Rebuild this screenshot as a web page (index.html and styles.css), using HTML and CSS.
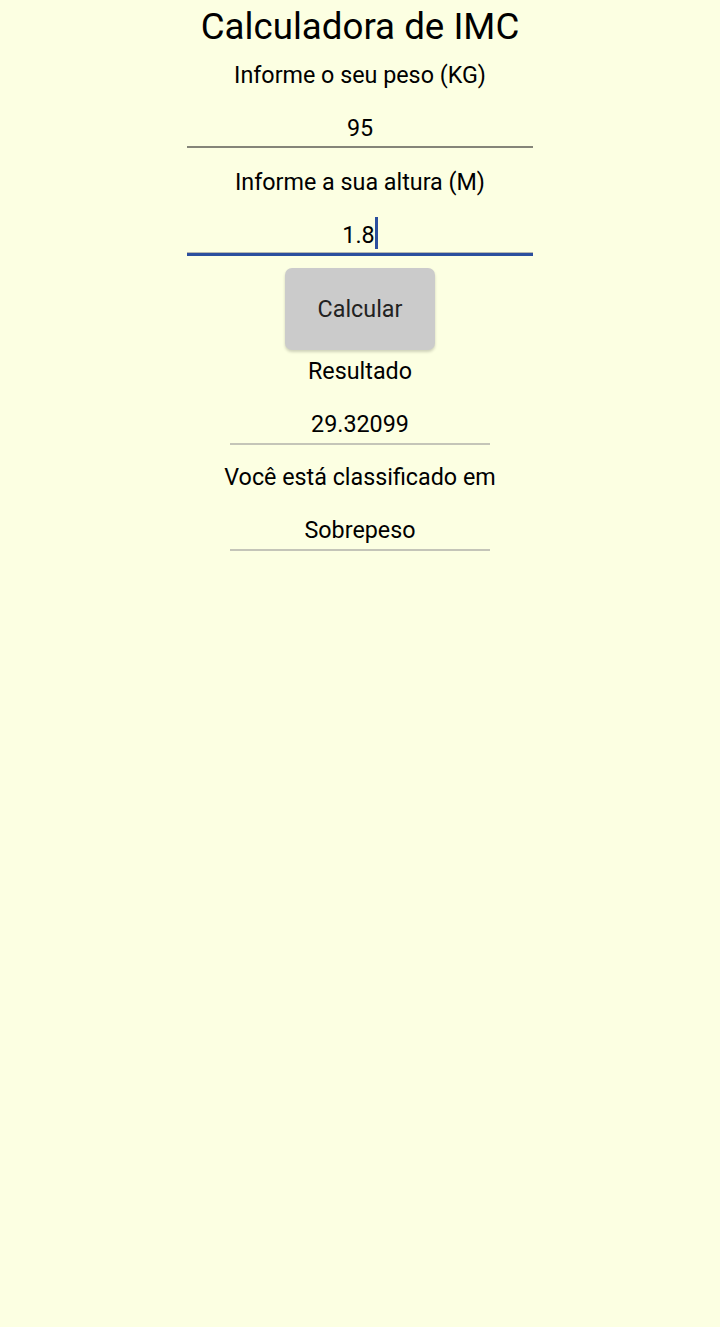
FILE: index.html
```html
<!DOCTYPE html>
<html lang="pt">
<head>
<meta charset="utf-8">
<title>Calculadora de IMC</title>
<link rel="stylesheet" href="styles.css">
</head>
<body>
<main class="screen">
  <h1 class="title">Calculadora de IMC</h1>
  <div class="label label-first">Informe o seu peso (KG)</div>
  <div class="field">95</div>
  <div class="label label-next">Informe a sua altura (M)</div>
  <div class="field field-focused">1.8<span class="cursor"></span></div>
  <button class="btn" type="button">Calcular</button>
  <div class="label label-result">Resultado</div>
  <div class="field field-output">29.32099</div>
  <div class="label label-class">Você está classificado em</div>
  <div class="field field-output">Sobrepeso</div>
</main>
</body>
</html>
```
FILE: styles.css
```css
html, body {
  margin: 0;
  padding: 0;
  background: #fcffe2;
}
body {
  font-family: Roboto, "Liberation Sans", sans-serif;
  color: #000;
  min-height: 1327px;
}
.screen {
  display: flex;
  flex-direction: column;
  align-items: center;
  padding-top: 7px;
}
.title {
  margin: 0;
  font-size: 36.7px;
  font-weight: 400;
  line-height: 40px;
  height: 40px;
}
.label {
  font-size: 23.3px;
  line-height: 30px;
  height: 30px;
}
.label-first { margin-top: 13px; }
.label-next { margin-top: 19px; }
.label-result { margin-top: 6px; }
.label-class { margin-top: 17px; }
.field {
  width: 346px;
  box-sizing: content-box;
  text-align: center;
  font-size: 23.3px;
  line-height: 30px;
  height: 30px;
  padding-top: 23px;
  padding-bottom: 3px;
  border-bottom: 2px solid #858579;
}
.field-focused {
  border-bottom: 3px solid #2b4f9e;
  box-shadow: 0 -1px 0 #b7b8b0 inset;
}
.cursor {
  position: relative;
  top: -3px;
  display: inline-block;
  width: 3px;
  height: 32px;
  margin-bottom: -2px;
  vertical-align: top;
  background: #2b4f9e;
}
.field-output {
  width: 260px;
  padding-bottom: 4px;
  border-bottom: 2px solid #c4c5b8;
}
.btn {
  margin-top: 12px;
  width: 150px;
  height: 82px;
  border: none;
  border-radius: 7px;
  background: #cbcbcb;
  color: #222;
  font-family: Roboto, "Liberation Sans", sans-serif;
  font-size: 23.3px;
  box-shadow: 0 2px 3px rgba(0,0,0,0.18);
  padding: 0;
}
```
